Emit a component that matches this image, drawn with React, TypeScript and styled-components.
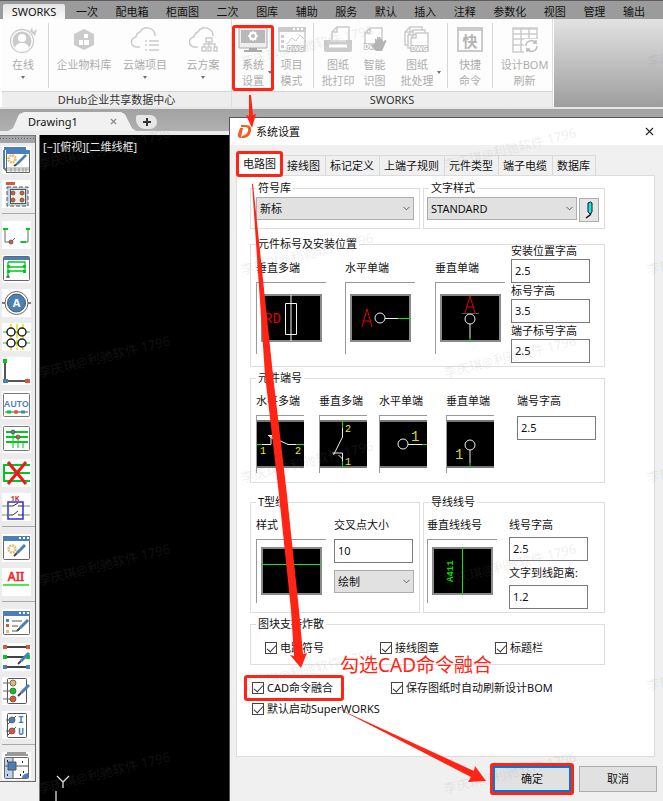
import React from "react";
import styled, { createGlobalStyle, css } from "styled-components";
import { ChevronDown, X } from "lucide-react";

const RED = "#ff2414";
const GREEN = "#00c81e";
const BLUE = "#4a7fb8";

const GlobalStyle = createGlobalStyle`
  * { box-sizing: border-box; }
  body {
    margin: 0;
    background: #f0f0f0;
    color: #111;
    font: 11px/14px "Noto Sans", "Noto Sans CJK SC", sans-serif;
  }
  button, input, select { font: inherit; color: inherit; }
`;

const highlight = css`
  position: relative;
  &::after {
    content: "";
    position: absolute;
    border: 3px solid ${RED};
    border-radius: 3px;
    pointer-events: none;
  }
`;

/* ---------- Shell ---------- */

const Shell = styled.div`
  position: relative;
  display: flex;
  flex-direction: column;
  min-height: 100vh;
  overflow: hidden;
`;

const MenuBar = styled.nav`
  display: flex;
  align-items: flex-end;
  height: 19px;
  padding-left: 3px;
  border-top: 1px solid #5e5c5e;
  background: #9b9b9b;
`;

const MenuTab = styled.button`
  width: 62px;
  height: 15px;
  padding: 0;
  border: 0;
  border-radius: 2px 2px 0 0;
  background: linear-gradient(#e4e4e4, #fafafa);
  line-height: 15px;
`;

const MenuItems = styled.div`
  display: flex;
  flex: 1;
  justify-content: space-between;
  max-width: 569px;
  margin-left: 11px;
`;

const MenuItem = styled.button`
  padding: 0;
  border: 0;
  background: none;
  line-height: 15px;
  white-space: nowrap;
`;

const Ribbon = styled.div`
  display: flex;
  height: 90px;
  padding-left: 2px;
  border-bottom: 2px solid #e6e6e6;
  background: #fff;
`;

const RibbonPanel = styled.section`
  display: flex;
  flex-direction: column;
  border-right: 1px solid #dedede;
  background: #fdfdfd;
`;

const RibbonTools = styled.div`
  display: flex;
  flex: 1;
`;

const RibbonLabel = styled.div`
  height: 16px;
  border-top: 1px solid #d4d4d4;
  background: #ededed;
  color: #333;
  line-height: 16px;
  text-align: center;
`;

const RibbonRest = styled.div`
  flex: 1;
  margin-left: 1px;
  background: linear-gradient(#e2e2e2, #9e9e9e);
`;

const RibbonSeparator = styled.div`
  width: 1px;
  margin: 4px 4px 3px;
  background: #d6d6d6;
`;

const RibbonButton = styled.button<{ $w: number; $marked?: boolean }>`
  position: relative;
  display: flex;
  flex-direction: column;
  align-items: center;
  width: ${(p) => p.$w}px;
  padding: 7px 0 0;
  border: 0;
  background: none;
  color: #adadad;
  line-height: 16px;
  white-space: nowrap;
  svg { display: block; margin-bottom: 2px; }
  ${(p) => p.$marked && highlight}
  &::after { inset: 6px 0 0 0; }
`;

const DropMark = styled.span<{ $side?: boolean }>`
  width: 0;
  height: 0;
  margin-top: 3px;
  border: 2px solid transparent;
  border-top: 3px solid #6e6e6e;
  border-bottom: 0;
  ${(p) => p.$side && css`position: absolute; right: 2px; bottom: 17px;`}
`;

const DocTabs = styled.div`
  display: flex;
  align-items: flex-end;
  height: 26px;
  padding-left: 8px;
  border-bottom: 4px solid #ebebeb;
  background: linear-gradient(#a2a2a2, #b0b0b0);
`;

const DocTab = styled.div`
  display: flex;
  justify-content: space-between;
  align-items: center;
  width: 128px;
  height: 19px;
  padding: 0 18px 0 20px;
  background: #f1f1f1;
  clip-path: polygon(0 100%, 5px 85%, 11px 12%, 16px 0, 113px 0, 117px 12%, 124px 85%, 128px 100%);
`;

const PlainIconButton = styled.button`
  display: flex;
  padding: 0;
  border: 0;
  background: none;
  color: #888;
`;

const AddTab = styled.button`
  display: grid;
  place-items: center;
  width: 21px;
  height: 14px;
  margin: 0 0 2px 0;
  padding: 0;
  border: 0;
  border-radius: 2px 7px 7px 9px;
  background: #e6e6e6;
`;

const Workspace = styled.div`
  display: flex;
  flex: 1;
`;

const ToolRail = styled.aside`
  align-self: flex-start;
  width: 36px;
  margin-right: 3px;
  padding: 0 0 1px 2px;
  border-top: 1px solid #777;
  border-right: 1px solid #666;
  border-bottom: 1px solid #666;
  background: #ececec;
`;

const RailHandle = styled.div`
  height: 7px;
  margin: 0 0 3px -2px;
  background: radial-gradient(circle, #666 30%, transparent 40%) 2px 1px / 3px 3px no-repeat, #a2a4a9;
  background-repeat: repeat-x;
`;

const RailGroup = styled.div`
  display: flex;
  flex-direction: column;
  gap: 6px;
  & + & {
    margin-top: 5px;
    padding-top: 7px;
    border-top: 1px solid #aaa;
  }
`;

const RailButton = styled.button`
  width: 29px;
  height: 28px;
  padding: 0;
  border: 0;
  background: #fff;
  svg { display: block; }
`;

const Canvas = styled.main`
  display: flex;
  flex: 1;
  flex-direction: column;
  justify-content: space-between;
  padding: 5px 0 0 3px;
  border-left: 1px solid #777;
  background: #000;
  color: #e8e8e8;
  svg { display: block; margin-left: 10px; }
`;

/* ---------- Dialog ---------- */

const Dialog = styled.div`
  position: absolute;
  top: 117px;
  right: 0;
  bottom: 0;
  left: 229px;
  display: flex;
  flex-direction: column;
  border-top: 1px solid #555;
  border-left: 1px solid #555;
  background: #f0f0f0;
`;

const TitleBar = styled.header`
  display: flex;
  flex: none;
  align-items: center;
  height: 27px;
  padding: 0 7px;
  background: #fff;
`;

const DialogTitle = styled.h1`
  flex: 1;
  margin: 0 0 0 4px;
  font-size: 11px;
  font-weight: 400;
`;

const TabList = styled.div`
  display: flex;
  flex: none;
  align-items: flex-end;
  height: 30px;
  padding-left: 7px;
`;

const Tab = styled.button<{ $active?: boolean }>`
  height: 20px;
  padding: 0 5px 0 4px;
  border: 1px solid #d9d9d9;
  border-width: 1px 1px 0 0;
  background: #f0f0f0;
  white-space: nowrap;
  ${(p) => p.$active && css`
    ${highlight}
    height: 23px;
    padding: 0 6px;
    background: #fff;
    z-index: 1;
    &::after { inset: -2px -1px -2px -1px; }
  `}
`;

const Pane = styled.form`
  flex: 1;
  margin: 0 8px 0 6px;
  padding: 5px 49px 30px 13px;
  border: 1px solid #dcdcdc;
  background: #fff;
`;

const GroupRow = styled.div`
  display: grid;
  grid-template-columns: 170fr 182fr;
  gap: 3px;
`;

const Group = styled.fieldset<{ $top?: number; $bottom: number; $left?: number }>`
  min-width: 0;
  margin: ${(p) => p.$top ?? 0}px 0 0;
  padding: 0 5px ${(p) => p.$bottom}px ${(p) => p.$left ?? 5}px;
  border: 1px solid #dedede;
  legend { margin-left: ${(p) => 5 - (p.$left ?? 5)}px; }
`;

const Legend = styled.legend`
  height: 14px;
  padding: 0 2px;
`;

const Columns = styled.div<{ $cols: string; $pad: number }>`
  display: grid;
  grid-template-columns: ${(p) => p.$cols};
  align-items: start;
  padding-top: ${(p) => p.$pad}px;
`;

const Inline = styled.div`
  display: flex;
  gap: 2px;
  margin-top: 2px;
`;

const SelectBox = styled.div`
  position: relative;
  flex: 1;
  svg { position: absolute; top: 6px; right: 2px; pointer-events: none; }
`;

const Select = styled.select`
  display: block;
  width: 100%;
  height: 23px;
  padding: 0 3px;
  border: 1px solid #adadad;
  border-radius: 0;
  background: #e1e1e1;
  appearance: none;
`;

const PenButton = styled.button`
  width: 20px;
  height: 24px;
  margin-top: 1px;
  padding: 0;
  border: 1px solid #adadad;
  background: #e6e6e6;
  svg { display: block; margin: auto; }
`;

const Figure = styled.figure`
  margin: 0;
`;

const Caption = styled.figcaption`
  margin-bottom: 7px;
  white-space: nowrap;
`;

const Frame = styled.div<{ $size: "tall" | "wide" | "tight" }>`
  width: ${(p) => (p.$size === "tight" ? 48 : 70)}px;
  padding: ${(p) => ({ tall: "11px 4px 12px", wide: "7px 4px 8px", tight: "4px 0 5px" }[p.$size])};
  border: 1px solid #999;
  border-width: 1px 0 0 1px;
  svg { display: block; background: #000; font-family: "Liberation Mono", monospace; }
`;

const Fields = styled.div<{ $gap: number; $lift?: boolean }>`
  display: flex;
  flex-direction: column;
  gap: ${(p) => p.$gap}px;
  ${(p) => p.$lift && "margin-top: -17px;"}
`;

const FieldLabel = styled.label<{ $gap: number }>`
  display: flex;
  flex-direction: column;
  gap: ${(p) => p.$gap}px;
  white-space: nowrap;
`;

const TextInput = styled.input`
  width: 79px;
  height: 24px;
  padding: 0 3px 2px;
  border: 1px solid #7a7a7a;
  background: #fff;
`;

const Checks = styled.div<{ $cols: string }>`
  display: grid;
  grid-template-columns: ${(p) => p.$cols};
  row-gap: 7px;
`;

const CheckLabel = styled.label<{ $marked?: boolean }>`
  display: flex;
  align-items: center;
  justify-self: start;
  gap: 3px;
  height: 14px;
  white-space: nowrap;
  ${(p) => p.$marked && highlight}
  &::after { inset: -6px -11px -6px -8px; }
`;

const CheckInput = styled.input`
  position: relative;
  width: 12px;
  height: 12px;
  margin: 0;
  border: 1px solid #444;
  background: #fff;
  appearance: none;
  &:checked::before {
    content: "";
    position: absolute;
    top: 0;
    left: 3px;
    width: 4px;
    height: 8px;
    border: solid #333;
    border-width: 0 1px 1px 0;
    transform: rotate(42deg);
  }
`;

const GroupChecks = styled.div`
  padding: 10px 0 0 9px;
`;

const LooseChecks = styled.div`
  margin: 16px 0 0 2px;
`;

const Footer = styled.footer`
  display: flex;
  justify-content: flex-end;
  gap: 8px;
  padding: 9px 6px;
`;

const DialogButton = styled.button<{ $primary?: boolean }>`
  width: 78px;
  height: 26px;
  padding: 0;
  border: ${(p) => (p.$primary ? "2px solid #0078d7" : "1px solid #adadad")};
  background: #e1e1e1;
  ${(p) => p.$primary && highlight}
  &::after { inset: -5px; }
`;

/* ---------- Overlays ---------- */

const Arrows = styled.svg`
  position: absolute;
  top: 0;
  left: 0;
  z-index: 3;
  pointer-events: none;
`;

const Note = styled.p`
  position: absolute;
  top: 653px;
  left: 340px;
  z-index: 3;
  margin: 0;
  color: ${RED};
  font-size: 19px;
  line-height: 24px;
  white-space: nowrap;
`;

const Watermark = styled.span<{ $x: number; $y: number }>`
  position: absolute;
  left: ${(p) => p.$x}px;
  top: ${(p) => p.$y}px;
  z-index: 2;
  color: rgba(128, 128, 128, 0.14);
  font-size: 13px;
  line-height: 16px;
  white-space: nowrap;
  transform: rotate(-14deg);
  transform-origin: 0 50%;
  pointer-events: none;
`;

/* ---------- Ribbon icons ---------- */

const G = "#cbcbcb";

const Doc = ({ x = 0, y = 0 }: { x?: number; y?: number }) => (
  <path d={`M${x + 6} ${y + 1}h12v18h-17v-13z M${x + 6} ${y + 1}v5h-5`} fill="#fff" stroke={G} strokeWidth="1.5" />
);
const Dwg = ({ x, y }: { x: number; y: number }) => (
  <text x={x} y={y} fontSize="7" fontWeight="700" fill="#fff" stroke="#b5b5b5" strokeWidth="1.4" paintOrder="stroke">DWG</text>
);
const CLOUD = "M10 21H7a5 5 0 0 1-1-10 6 6 0 0 1 4-5 8 8 0 0 1 15 4";

const ribbonArt: Record<string, React.ReactNode> = {
  online: <><circle cx="14" cy="15" r="11.5" fill="none" stroke={G} strokeWidth="1.3" /><circle cx="14" cy="15" r="9.5" fill={G} /><circle cx="14" cy="12" r="4" fill="#fff" /><path d="M7 22q1-4 5-5h4q4 1 5 5-7 6-14 0" fill="#fff" /><path d="m20 3 2 3 2-5 1 5 4-3-2 7" fill={G} /></>,
  cube: <><path d="m15 3 10 5v11l-10 5-10-5V8z" fill={G} /><path d="M15 8h4v4h-4zM10 14h4v5h-4zM15 14h5v5h-5z" fill="#fff" /></>,
  cloudList: <><path d={CLOUD} fill="none" stroke={G} strokeWidth="1.5" /><path d="M15 15h2m2 0h10m-14 4h2m2 0h10m-14 5h2m2 0h10" stroke={G} strokeWidth="1.5" /></>,
  cloudTree: <><path d={CLOUD} fill="none" stroke={G} strokeWidth="1.5" /><path d="M18 12h6v4h-6zM14 21h4v4h-4zM20 21h3v4h-3zM26 21h3v4h-3zM21 16v5m-5 0v-3h11v3" fill="none" stroke={G} strokeWidth="1.4" /></>,
  monitor: <><path d="M1 2h28v20H1z" fill="#eee" stroke="#aaa" /><path d="M3 4h24v13H3z" fill="#b8b8b8" /><circle cx="15" cy="10" r="3" fill="none" stroke="#fff" strokeWidth="2" /><path d="M15 5v2m0 6v2m-5-5h2m6 0h2m-8-4 1 1m4 6 1 1m0-8-1 1m-4 6-1 1" stroke="#fff" strokeWidth="1.5" /><path d="M11 22h8v2h5v2H6v-2h5z" fill="#aaa" /></>,
  project: <><path d="M2 2h26v23H2z" fill="#fff" stroke={G} strokeWidth="1.5" /><path d="M1 1h28v5H1z" fill={G} /><path d="M16 3h2m2 0h2m2 0h2" stroke="#fff" strokeWidth="2" /><path d="M4 9h3v3H4zM4 14h3v3H4zM4 19h3v3H4z" fill={G} /><path d="m10 18 5-6 4 3 4-6 4 4" fill="none" stroke={G} /><Dwg x={10} y={25} /></>,
  print: <><Doc x={8} y={0} /><path d="M1 14h28v10q0 2-2 2H3q-2 0-2-2z" fill={G} /><path d="M6 20h18" stroke="#fff" strokeWidth="3" /><path d="M7 15h16" stroke="#eee" /></>,
  scan: <><Doc x={4} y={1} /><Dwg x={4} y={23} /><path d="M15 18v-5q2-1 2 3v-5q2-1 2 4v-4q2-1 2 4v-2q2 0 2 3l2-2q2 0 1 2l-4 9h-6l-5-6z" fill="#b4b4b4" /></>,
  stack: <><Doc x={2} y={0} /><Doc x={5} y={3} /><Doc x={8} y={6} /><Dwg x={9} y={25} /></>,
  quick: <><path d="M3 2h24v23H3z" fill="#fff" stroke={G} strokeWidth="2" /><path d="M3 2h24v3H3z" fill={G} /><text x="15" y="21" fontSize="15" fontWeight="700" textAnchor="middle" fill="#b4b4b4">快</text></>,
  table: <><path d="M3 2h24v24H3z" fill="#fff" stroke={G} strokeWidth="1.5" /><path d="M3 3h24M3 8h24M3 13h24M3 19h24M11 2v24M19 2v11" stroke={G} strokeWidth="1.5" /><path d="M14 13h15v14H14z" fill="#fff" /><path d="M16 20a5.500 5.500 0 0 1 10-3v-3m0 3h-3m4 3a5.500 5.500 0 0 1-10 3v3m0-3h3" fill="none" stroke="#bbb" strokeWidth="1.5" /></>,
};

type Tool = { icon: string; lines: string[]; w: number; drop?: "below" | "side"; marked?: boolean } | null;

const hubTools: Tool[] = [
  { icon: "online", lines: ["在线"], w: 42, drop: "below" },
  null,
  { icon: "cube", lines: ["企业物料库"], w: 62 },
  { icon: "cloudList", lines: ["云端项目"], w: 60, drop: "below" },
  { icon: "cloudTree", lines: ["云方案"], w: 56, drop: "below" },
];
const worksTools: Tool[] = [
  { icon: "monitor", lines: ["系统", "设置"], w: 42, drop: "side", marked: true },
  { icon: "project", lines: ["项目", "模式"], w: 35 },
  null,
  { icon: "print", lines: ["图纸", "批打印"], w: 40 },
  { icon: "scan", lines: ["智能", "识图"], w: 33 },
  { icon: "stack", lines: ["图纸", "批处理"], w: 52, drop: "side" },
  null,
  { icon: "quick", lines: ["快捷", "命令"], w: 36 },
  null,
  { icon: "table", lines: ["设计BOM", "刷新"], w: 55 },
];

const Tools = ({ items, label }: { items: Tool[]; label: string }) => (
  <RibbonPanel>
    <RibbonTools>
      {items.map((t, i) =>
        t ? (
          <RibbonButton key={i} $w={t.w} $marked={t.marked}>
            <svg width="30" height="29" viewBox="0 0 30 29">{ribbonArt[t.icon]}</svg>
            {t.lines.map((l) => <span key={l}>{l}</span>)}
            {t.drop && <DropMark $side={t.drop === "side"} />}
          </RibbonButton>
        ) : (
          <RibbonSeparator key={i} />
        ),
      )}
    </RibbonTools>
    <RibbonLabel>{label}</RibbonLabel>
  </RibbonPanel>
);

/* ---------- Tool rail icons ---------- */

const Pen = ({ x, y }: { x: number; y: number }) => (
  <g>
    <path d={`m${x} ${y} 8-8`} stroke={BLUE} strokeWidth="3" />
    <path d={`m${x - 3} ${y + 3} 3-3`} stroke="#444" strokeWidth="2" />
  </g>
);
const Win = () => (
  <><rect x="1.500" y="2.500" width="26" height="23" rx="1" fill="#fff" stroke="#666" /><path d="M1 2h27v5H1z" fill={BLUE} /><path d="M17 4h2m2 0h2m2 0h2" stroke="#fff" strokeWidth="2" /></>
);
const Gear = ({ y = 13 }: { y?: number }) => (
  <circle cx="10" cy={y} r="3.500" fill="none" stroke="#e9b96b" strokeWidth="2.500" strokeDasharray="2 .7" />
);
const C = ({ x, y, f, r = 2 }: { x: number; y: number; f: string; r?: number }) => (
  <circle cx={x} cy={y} r={r} fill={f} stroke="#555" strokeWidth=".8" />
);
const ORANGE = "#d9573a";

const railArt: { name: string; art: React.ReactNode }[][] = [
  [
    { name: "图纸设置", art: <><path d="M2 4v18l3 3" fill="none" stroke={BLUE} strokeWidth="2" /><path d="M2 1h22v3H2z" fill={BLUE} /><rect x="4.500" y="4.500" width="23" height="22" fill="#fff" stroke="#666" /><path d="M4 4h24v4H4z" fill={BLUE} /><Gear y={13} /><path d="m15 18 9-9" stroke={BLUE} strokeWidth="2.500" /><path d="m12 20 3-2" stroke="#444" strokeWidth="2" /><path d="M5 22h22M9 22v4m4-4v4m4-4v4m4-4v4m3-4v4M5 24h22" stroke="#999" /></> },
    { name: "端子排", art: <><path d="M4 2h9v3H4z" fill={ORANGE} /><rect x="5" y="7" width="21" height="19" fill="#bdd4ea" stroke="#555" strokeDasharray="4 2" /><rect x="8.500" y="9.500" width="15" height="14" fill="#f3ede3" stroke="#555" /><C x={11} y={13} f={ORANGE} /><C x={20} y={13} f={ORANGE} /><C x={11} y={20} f={ORANGE} /><C x={20} y={20} f={ORANGE} /></> },
  ],
  [
    { name: "回路", art: <><path d="M3 8v13h6m9 0h8V8M9 21l4-4" fill="none" stroke="#666" /><path d="M1 8h5M24 8h4M19 21h5" stroke={GREEN} strokeWidth="2" /><C x={9} y={21} f={ORANGE} /></> },
    { name: "多线", art: <><rect x="1.500" y="1.500" width="26" height="24" rx="1" fill="#fff" stroke="#666" /><path d="M2 2h25v3H2z" fill={BLUE} /><path d="M6 7h17v11M6 7v14M6 12h17M6 16h17" fill="none" stroke={GREEN} strokeWidth="1.300" /><path d="M5 10h3v3H5zm0 5h3v3H5zm16-5h3v3h-3zm0 5h3v3h-3z" fill={GREEN} /><path d="M6 20v3m-2-1h4" stroke="#444" /></> },
    { name: "仪表", art: <><path d="M0 14h29" stroke="#555" strokeWidth="1.500" /><circle cx="14.500" cy="14" r="11.500" fill="#fff" stroke="#666" /><circle cx="14.500" cy="14" r="9" fill={BLUE} stroke="#555" /><text x="14.500" y="18" textAnchor="middle" fontSize="11" fontWeight="700" fill="#fff">A</text></> },
    { name: "端子", art: <><path d="M9 1v26m6-26v26m6-26v26" stroke="#e4e000" strokeWidth="1.500" strokeDasharray="6 2" /><path d="M1 9h27M1 20h27" stroke={GREEN} /><g fill="#fff" stroke="#222" strokeWidth="1.500"><circle cx="9" cy="9" r="4" /><circle cx="20" cy="9" r="4" /><circle cx="9" cy="20" r="4" /><circle cx="20" cy="20" r="4" /></g></> },
    { name: "折线", art: <><path d="M3 4v20h21" fill="none" stroke="#555" strokeWidth="2" /><path d="M1 2h4v4H1z" fill={GREEN} /><path d="M1 22h5v4H1z" fill={BLUE} /><path d="M23 22h5v4h-5z" fill={ORANGE} /></> },
    { name: "自动", art: <><rect x="1.500" y="2.500" width="26" height="23" rx="1" fill="#fff" stroke="#777" /><text x="14.500" y="16" textAnchor="middle" fontSize="9" fontWeight="600" fill={BLUE}>AUTO</text><path d="M3 21h23" stroke="#555" /><path d="M5 21h4" stroke={GREEN} strokeWidth="3" /><circle cx="14" cy="21" r="2" fill={ORANGE} /><path d="M19 21h4" stroke={BLUE} strokeWidth="3" /></> },
    { name: "连接点", art: <><rect x="1.500" y="1.500" width="26" height="24" rx="1" fill="#fff" stroke="#777" /><path d="M4 7h22M4 12h22M4 17h22" stroke={GREEN} strokeWidth="2" /><path d="M11 7v16m5-11v11m5-6v6" stroke={GREEN} /><C x={11} y={7} f={BLUE} /><C x={16} y={12} f={ORANGE} /></> },
    { name: "删除线", art: <><path d="M28 6H2v16h26M2 14h26" fill="none" stroke={GREEN} strokeWidth="2" /><path d="m6 3 18 22M24 3 6 25" stroke="#f01818" strokeWidth="3" /></> },
    { name: "继电器", art: <><path d="M0 13h28M0 22h28" stroke="#6a9a5a" /><path d="M6 9h15v17H6z" fill="#fff" stroke="#3030d0" strokeWidth="1.500" /><path d="M7 13h4l5-3m0 3h5M7 22h4l5-4m0 4h5" fill="none" stroke="#333" /><text x="13" y="8" textAnchor="middle" fontSize="7" fontWeight="700" fill="#d22">1K</text></> },
  ],
  [
    { name: "设置", art: <><Win /><Gear y={15} /><Pen x={15} y={19} /></> },
    { name: "全部", art: <><text x="14" y="13" textAnchor="middle" fontSize="12" fontWeight="500" fill="#f02828" stroke="#f02828" strokeWidth=".5">AII</text><path d="M1 17h26" stroke="#10e010" strokeWidth="1.500" /></> },
  ],
  [
    { name: "列表编辑", art: <><Win /><path d="M4 10h3v3H4z" fill={BLUE} /><path d="M4 15h3v3H4z" fill={ORANGE} /><path d="M4 21h3v3H4z" fill="#e9b96b" /><path d="M10 12h10m-10 5h6m-6 5h5" stroke="#555" /><Pen x={18} y={19} /></> },
    { name: "线编辑", art: <><path d="M2 4h25M2 14h25M2 24h25" stroke="#444" strokeWidth="2" /><path d="M1 2h4v4H1zm23 0h4v4h-4z" fill={ORANGE} /><path d="M1 12h4v4H1zm23 0h4v4h-4z" fill={GREEN} /><path d="M1 22h4v4H1zm23 0h4v4h-4z" fill={BLUE} /><Pen x={19} y={18} /></> },
    { name: "端口编辑", art: <><rect x="5.500" y="1.500" width="19" height="25" rx="1" fill="#fff" stroke="#555" /><path d="M1 6h8m-8 8h8m-8 8h8" stroke="#666" /><C x={11} y={6} r={3} f="#e9b96b" /><C x={11} y={14} r={3} f={GREEN} /><C x={11} y={22} r={3} f={ORANGE} /><Pen x={19} y={16} /></> },
    { name: "电流电压", art: <><rect x="5.500" y="2.500" width="19" height="24" rx="1" fill="#fff" stroke="#555" /><path d="m4 9h6m-6 11h6M6 13l8-8M6 24l8-8" stroke="#555" /><C x={10} y={9} r={3} f={BLUE} /><C x={10} y={20} r={3} f={ORANGE} /><g fontFamily="Liberation Mono" fontSize="10" fontWeight="700" fill={BLUE}><text x="16" y="12">I</text><text x="16" y="24">U</text></g></> },
  ],
  [
    { name: "布局", art: <><path d="M5 1h19M3 3h23" stroke="#999" strokeWidth="2" /><rect x="2.500" y="5.500" width="24" height="21" rx="1" fill="#fff" stroke="#666" /><path d="M3 6h8v20H3z" fill="#bdd4ea" /><path d="M11 6v20M3 14h23" stroke="#555" /><path d="M6 10h8v8H6z" fill={BLUE} stroke="#555" /><path d="M26 21v5h-6q0-4 6-5" fill={BLUE} /><path d="M5 9h1m14 1h1m0 10h1M5 23h1m12 0h1" stroke="#222" strokeWidth="2" /></> },
  ],
];

/* ---------- Symbol previews ---------- */

const Bordered = ({ children }: { children: React.ReactNode }) => (
  <svg width="61" height="48" viewBox="0 0 61 48">
    <rect x="1" y="1" width="59" height="46" fill="#000" stroke="#8a8a8a" strokeWidth="2" />
    {children}
  </svg>
);
const Tight = ({ children }: { children: React.ReactNode }) => (
  <svg width="47" height="48" viewBox="0 0 47 48">
    <path d="M0 1h47M0 47h47" stroke="#777" strokeWidth="2" />
    {children}
  </svg>
);

const Preview = ({ caption, size, children }: { caption: string; size: "tall" | "wide" | "tight"; children: React.ReactNode }) => (
  <Figure>
    <Caption>{caption}</Caption>
    <Frame $size={size}>{children}</Frame>
  </Figure>
);

const Field = ({ label, value, gap }: { label: string; value: string; gap: number }) => (
  <FieldLabel $gap={gap}>
    {label}
    <TextInput defaultValue={value} />
  </FieldLabel>
);

const Dropdown = ({ value, name }: { value: string; name: string }) => (
  <SelectBox>
    <Select aria-label={name} defaultValue={value}>
      <option>{value}</option>
    </Select>
    <ChevronDown size={11} strokeWidth={2} color="#555" />
  </SelectBox>
);

const Check = ({ label, marked }: { label: string; marked?: boolean }) => (
  <CheckLabel $marked={marked}>
    <CheckInput type="checkbox" defaultChecked />
    {label}
  </CheckLabel>
);

const menu = ["一次", "配电箱", "柜面图", "二次", "图库", "辅助", "服务", "默认", "插入", "注释", "参数化", "视图", "管理", "输出"];
const tabs = ["电路图", "接线图", "标记定义", "上端子规则", "元件类型", "端子电缆", "数据库"];

const watermarks = [0, 1, 2, 3].flatMap((col) =>
  [0, 1, 2, 3].map((row) => ({ x: 38 + col * 203, y: (col % 2 ? 54 : 157) + row * 208 })),
);

export default function App() {
  return (
    <Shell>
      <GlobalStyle />
      <MenuBar>
        <MenuTab>SWORKS</MenuTab>
        <MenuItems>
          {menu.map((m) => <MenuItem key={m}>{m}</MenuItem>)}
        </MenuItems>
      </MenuBar>

      <Ribbon>
        <Tools items={hubTools} label="DHub企业共享数据中心" />
        <Tools items={worksTools} label="SWORKS" />
        <RibbonRest />
      </Ribbon>

      <DocTabs>
        <DocTab>
          Drawing1
          <PlainIconButton aria-label="关闭标签"><X size={9} strokeWidth={3} /></PlainIconButton>
        </DocTab>
        <AddTab aria-label="新建标签">
          <svg width="8" height="8" viewBox="0 0 8 8"><path d="M4 0v8M0 4h8" stroke="#333" strokeWidth="2" /></svg>
        </AddTab>
      </DocTabs>

      <Workspace>
        <ToolRail>
          <RailHandle />
          {railArt.map((group, i) => (
            <RailGroup key={i}>
              {group.map((icon) => (
                <RailButton key={icon.name} aria-label={icon.name}>
                  <svg width="29" height="28" viewBox="0 0 29 28">{icon.art}</svg>
                </RailButton>
              ))}
            </RailGroup>
          ))}
        </ToolRail>
        <Canvas>
          <span>[−][俯视][二维线框]</span>
          <svg width="20" height="26" viewBox="0 0 20 26">
            <path d="m4 1 6 6 6-6M10 7v6M3 16v10" fill="none" stroke="#ddd" strokeWidth="1.300" />
          </svg>
        </Canvas>
      </Workspace>

      <Dialog role="dialog" aria-label="系统设置">
        <TitleBar>
          <svg width="15" height="15" viewBox="0 0 15 15">
            <path d="M4 1h5q6 0 5 6-1 6-7 7H4l1-2q5-1 6-5 1-4-3-4H4z" fill="#f2601b" />
            <path d="M3 4h3L5 9q-1 3-1 5-4 0-3-4z" fill="#f2601b" />
          </svg>
          <DialogTitle>系统设置</DialogTitle>
          <PlainIconButton aria-label="关闭"><X size={13} strokeWidth={2} color="#222" /></PlainIconButton>
        </TitleBar>
        <TabList role="tablist">
          {tabs.map((t, i) => (
            <Tab key={t} role="tab" aria-selected={i === 0} $active={i === 0}>{t}</Tab>
          ))}
        </TabList>

        <Pane id="settings">
          <GroupRow>
            <Group $bottom={8}>
              <Legend>符号库</Legend>
              <Inline><Dropdown name="符号库" value="新标" /></Inline>
            </Group>
            <Group $bottom={6} $left={3}>
              <Legend>文字样式</Legend>
              <Inline>
                <Dropdown name="文字样式" value="STANDARD" />
                <PenButton type="button" aria-label="编辑文字样式">
                  <svg width="12" height="18" viewBox="0 0 12 18">
                    <path d="M5 2q3-2 4 0v9l-2 2-2-2z" fill="#14e6f0" stroke="#111" />
                    <path d="m8 12-1 2-4 3" fill="none" stroke="#111" strokeWidth="1.500" />
                  </svg>
                </PenButton>
              </Inline>
            </Group>
          </GroupRow>

          <Group $top={8} $bottom={3}>
            <Legend>元件标号及安装位置</Legend>
            <Columns $cols="89fr 90fr 76fr 88fr" $pad={10}>
              <Preview caption="垂直多端" size="tall">
                <Bordered>
                  <text x="3" y="29" fontSize="14" fill="#e00000">RD</text>
                  <path d="M24.500 9.500h11v31h-11zM30 1v46" fill="none" stroke="#f4f4f4" />
                </Bordered>
              </Preview>
              <Preview caption="水平单端" size="tall">
                <Bordered>
                  <path d="m12 33 5-18 5 18M13.500 27h7" fill="none" stroke="#e80000" />
                  <circle cx="30" cy="24" r="5" fill="none" stroke="#eee" />
                  <path d="M35 24.500h13" stroke="#eee" /><path d="M48 24.500h13" stroke="#0e0" />
                </Bordered>
              </Preview>
              <Preview caption="垂直单端" size="tall">
                <Bordered>
                  <path d="m25 19 5-17 5 17M27 13h6" fill="none" stroke="#e80000" />
                  <path d="M22 19.500h17" stroke="#555" />
                  <circle cx="30" cy="25" r="5" fill="none" stroke="#eee" />
                  <path d="M30 30v14" stroke="#eee" /><path d="M30 44v4" stroke="#0e0" />
                </Bordered>
              </Preview>
              <Fields $gap={1} $lift>
                <Field gap={1} label="安装位置字高" value="2.5" />
                <Field gap={1} label="标号字高" value="3.5" />
                <Field gap={1} label="端子标号字高" value="2.5" />
              </Fields>
            </Columns>
          </Group>

          <Group $top={4} $bottom={9}>
            <Legend>元件端号</Legend>
            <Columns $cols="63fr 60fr 67fr 71fr 82fr" $pad={9}>
              <Preview caption="水平多端" size="tight">
                <Tight>
                  <path d="M5 24.500h9v-9m-3 0h6m-3 1 17 8h8M12 16l4 3" fill="none" stroke="#eee" />
                  <path d="M0 24.500h5m34 0h8" stroke="#0e0" />
                  <g fontSize="10" fill="#f0f000"><text x="3" y="34">1</text><text x="38" y="34">2</text></g>
                </Tight>
              </Preview>
              <Preview caption="垂直多端" size="tight">
                <Tight>
                  <path d="M22.500 8v9l-9 18m-1-2h10v8m-4-6 4 4" fill="none" stroke="#eee" />
                  <path d="M22.500 1v7m0 33v6" stroke="#0e0" />
                  <g fontSize="10" fill="#f0f000"><text x="25" y="12">2</text><text x="25" y="45">1</text></g>
                </Tight>
              </Preview>
              <Preview caption="水平单端" size="tight">
                <Tight>
                  <circle cx="23" cy="24" r="5" fill="none" stroke="#eee" />
                  <path d="M28 24.500h14" stroke="#eee" /><path d="M42 24.500h5" stroke="#0e0" />
                  <text x="31" y="21" fontSize="14" fill="#d8d800">1</text>
                </Tight>
              </Preview>
              <Preview caption="垂直单端" size="tight">
                <Tight>
                  <circle cx="23" cy="25" r="5" fill="none" stroke="#eee" />
                  <path d="M23 30v13" stroke="#eee" /><path d="M23 43v4" stroke="#0e0" />
                  <text x="8" y="39" fontSize="14" fill="#d8d800">1</text>
                </Tight>
              </Preview>
              <Field gap={8} label="端号字高" value="2.5" />
            </Columns>
          </Group>

          <GroupRow>
            <Group $top={12} $bottom={9}>
              <Legend>T型线</Legend>
              <Columns $cols="78px 1fr" $pad={9}>
                <Preview caption="样式" size="wide">
                  <Bordered><path d="M0 17.500h61" stroke="#00f000" /></Bordered>
                </Preview>
                <Fields $gap={7}>
                  <Field gap={7} label="交叉点大小" value="10" />
                  <Dropdown name="绘制方式" value="绘制" />
                </Fields>
              </Columns>
            </Group>
            <Group $top={12} $bottom={3} $left={3}>
              <Legend>导线线号</Legend>
              <Columns $cols="82px 1fr" $pad={9}>
                <Preview caption="垂直线线号" size="wide">
                  <Bordered>
                    <path d="M30.500 1v46" stroke="#00f000" />
                    <text transform="translate(21 35) rotate(-90)" fontSize="9" fontWeight="700" fill="#00e000">A411</text>
                  </Bordered>
                </Preview>
                <Fields $gap={5}>
                  <Field gap={5} label="线号字高" value="2.5" />
                  <Field gap={5} label="文字到线距离:" value="1.2" />
                </Fields>
              </Columns>
            </Group>
          </GroupRow>

          <Group $top={4} $bottom={9}>
            <Legend>图块支持炸散</Legend>
            <GroupChecks>
              <Checks $cols="115px 115px 1fr">
                <Check label="电路符号" />
                <Check label="接线图章" />
                <Check label="标题栏" />
              </Checks>
            </GroupChecks>
          </Group>

          <LooseChecks>
            <Checks $cols="139px 1fr">
              <Check label="CAD命令融合" marked />
              <Check label="保存图纸时自动刷新设计BOM" />
              <Check label="默认启动SuperWORKS" />
            </Checks>
          </LooseChecks>
        </Pane>

        <Footer>
          <DialogButton type="submit" form="settings" $primary>确定</DialogButton>
          <DialogButton type="button">取消</DialogButton>
        </Footer>
      </Dialog>

      {watermarks.map((w) => (
        <Watermark key={`${w.x}-${w.y}`} $x={w.x} $y={w.y} aria-hidden>李庆琪@利驰软件 1796</Watermark>
      ))}

      <Note>勾选CAD命令融合</Note>
      <Arrows width="500" height="800" viewBox="0 0 500 800" fill={RED}>
        <path d="M249 95h2l2 20 3-1-4 14-6-13 3 1z" />
        <path d="M252 184h1L273 375l14 120 12 115 4 44 4-1-6 15-11-13 4 1-3-46-12-115-14-120z" />
        <path d="m337 708 137 63 1-5 11 15-18 1 3-5z" />
      </Arrows>
    </Shell>
  );
}
